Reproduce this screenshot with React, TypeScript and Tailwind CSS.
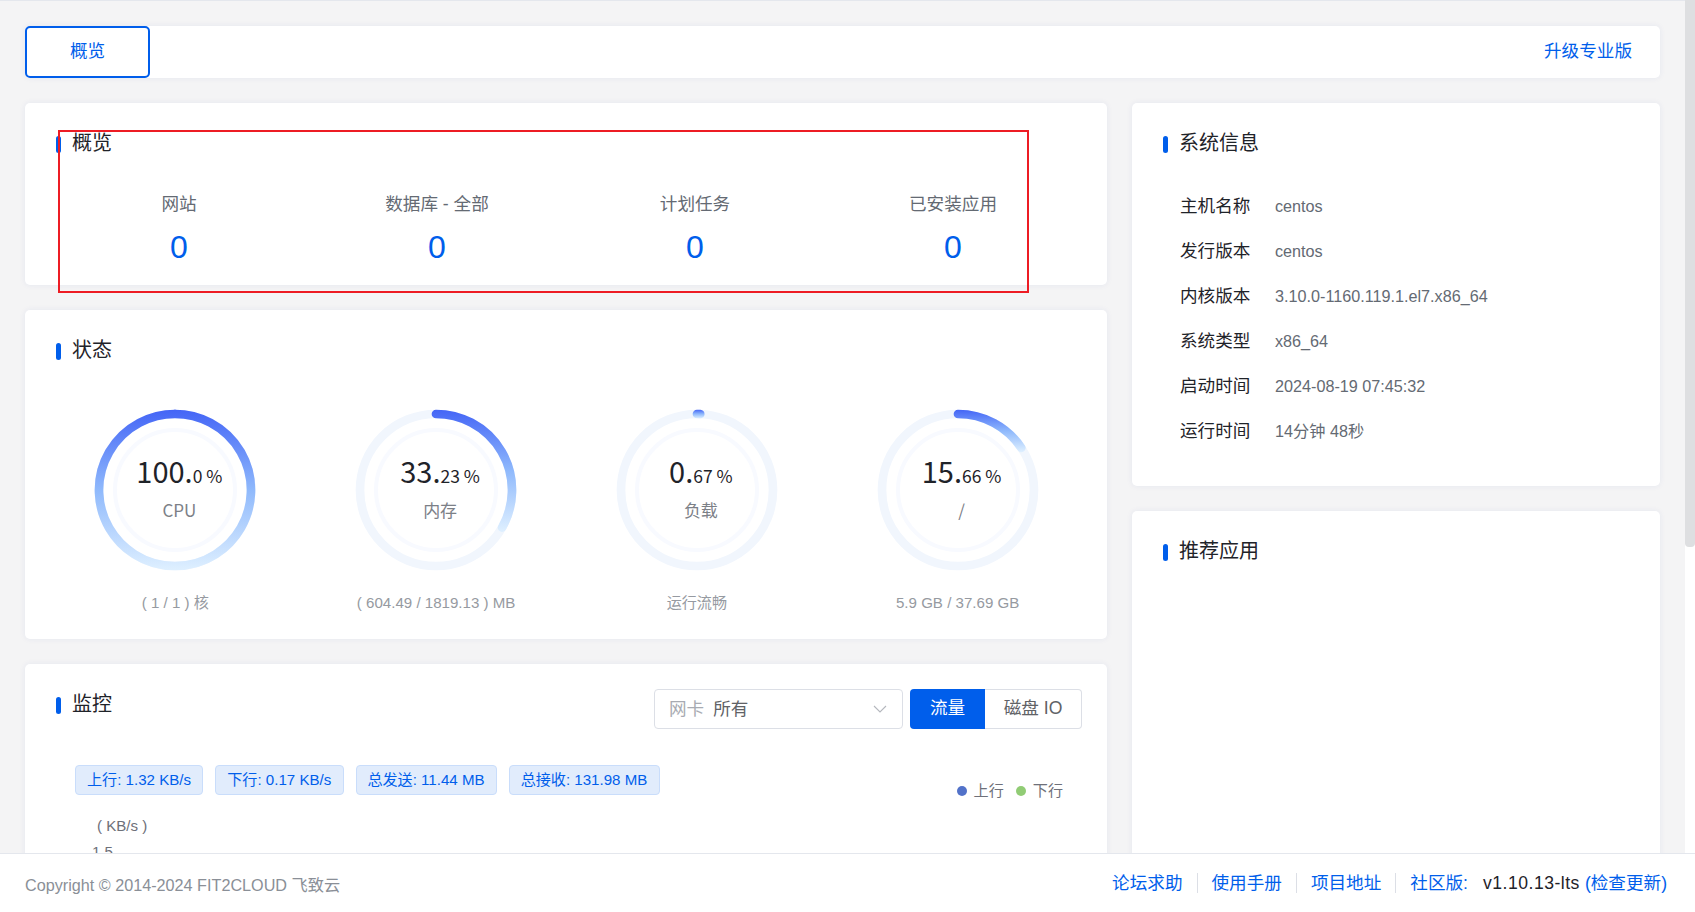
import React from "react";

const sans = "font-['Liberation_Sans','Noto_Sans_CJK_SC',sans-serif]";

function Title({ children }: { children: React.ReactNode }) {
  return (
    <div className="flex h-[24px] items-center">
      <span className="mt-[3px] h-[17px] w-[5px] rounded-[3px] bg-[#005eeb]" />
      <span className="ml-[11px] text-[20px] leading-[24px] text-[#1f2329]">{children}</span>
    </div>
  );
}

function Gauge({ id, pct, big, small, name, sub }: { id: string; pct: number; big: string; small: string; name: string; sub: string }) {
  const c = 84;
  const r = 76;
  const w = 8.7;
  const a = (pct / 100) * 2 * Math.PI;
  const ex = c + r * Math.sin(a);
  const ey = c - r * Math.cos(a);
  const full = pct >= 100;
  const d = full
    ? `M ${c} ${c - r} A ${r} ${r} 0 1 1 ${c - 0.01} ${c - r}`
    : `M ${c} ${c - r} A ${r} ${r} 0 ${pct > 50 ? 1 : 0} 1 ${ex} ${ey}`;
  const y1 = c - r - w / 2;
  const y2 = (full ? c + r : ey) + w / 2;
  return (
    <div className="flex flex-col items-center">
      <div className="relative h-[168px] w-[168px]">
        <svg width="168" height="168" viewBox="0 0 168 168">
          <defs>
            <linearGradient id={id} gradientUnits="userSpaceOnUse" x1="0" y1={y1} x2="0" y2={y2}>
              <stop offset="0" stopColor="#4465f6" />
              <stop offset="0.5" stopColor="#8fb9fc" />
              <stop offset="1" stopColor="#dff0ff" />
            </linearGradient>
          </defs>
          <circle cx={c} cy={c} r={r} fill="none" stroke="#f1f6fd" strokeWidth={w} />
          <circle cx={c} cy={c} r={60} fill="none" stroke="#f8faff" strokeWidth={4} />
          <path d={d} fill="none" stroke={`url(#${id})`} strokeWidth={w} strokeLinecap="round" />
        </svg>
        <div className="absolute inset-0 flex flex-col items-center pl-[8px] font-['Noto_Sans_CJK_SC',sans-serif]">
          <div className="mt-[44px] h-[40px] whitespace-nowrap leading-[40px] text-[#1f2329]">
            <span className="text-[29px]">{big}</span>
            <span className="text-[17.5px]">{small}</span>
          </div>
          <div className="mt-[9px] text-[17px] leading-[22px] text-[#7c8087]">{name}</div>
        </div>
      </div>
      <div className="mt-[19px] text-[15.1px] leading-[20px] text-[#969aa1]">{sub}</div>
    </div>
  );
}

function Stat({ label }: { label: string }) {
  return (
    <div className="flex flex-col items-center">
      <div className="text-[17.6px] leading-[24px] text-[#646a73]">{label}</div>
      <div className="mt-[14px] text-[32px] leading-[34px] text-[#005eeb]">0</div>
    </div>
  );
}

const rows = [
  ["主机名称", "centos"],
  ["发行版本", "centos"],
  ["内核版本", "3.10.0-1160.119.1.el7.x86_64"],
  ["系统类型", "x86_64"],
  ["启动时间", "2024-08-19 07:45:32"],
  ["运行时间", "14分钟 48秒"],
];

const cardCls = "rounded-[5px] bg-white shadow-[0_0_6px_rgba(0,60,160,0.07)]";

export default function App() {
  return (
    <div className={`flex h-screen w-full flex-col overflow-hidden bg-white ${sans}`}>
      <div className="flex min-h-0 flex-1">
        <div className="relative flex min-w-0 flex-1 flex-col overflow-hidden border-t border-[#e4e7ed] bg-[#f4f4f5] px-[25px] pt-[25px]">
          <div className={`flex h-[52px] shrink-0 items-center justify-between pr-[28px] ${cardCls}`}>
            <div className="flex h-[52px] w-[125px] items-center justify-center rounded-[5px] border-2 border-[#005eeb] pb-[2px] text-[17.6px] text-[#005eeb]">
              概览
            </div>
            <span className="pb-[2px] text-[17.6px] text-[#005eeb]">升级专业版</span>
          </div>

          <div className="mt-[25px] grid grid-cols-[1082px_528px] gap-x-[25px]">
            <div className="flex flex-col gap-[25px]">
              <div className={`h-[182px] shrink-0 ${cardCls} px-[25px] pt-[28px]`}>
                <div className="pl-[6px]">
                  <Title>概览</Title>
                </div>
                <div className="mt-[37px] grid grid-cols-4">
                  <Stat label="网站" />
                  <Stat label="数据库 - 全部" />
                  <Stat label="计划任务" />
                  <Stat label="已安装应用" />
                </div>
              </div>

              <div className={`h-[329px] shrink-0 ${cardCls} pl-[20px] pr-[19px] pt-[28px]`}>
                <div className="pl-[11px]">
                  <Title>状态</Title>
                </div>
                <div className="mt-[44px] grid grid-cols-4">
                  <Gauge id="g1" pct={100} big="100." small="0 %" name="CPU" sub="( 1 / 1 ) 核" />
                  <Gauge id="g2" pct={33.23} big="33." small="23 %" name="内存" sub="( 604.49 / 1819.13 ) MB" />
                  <Gauge id="g3" pct={0.67} big="0." small="67 %" name="负载" sub="运行流畅" />
                  <Gauge id="g4" pct={15.66} big="15." small="66 %" name="/" sub="5.9 GB / 37.69 GB" />
                </div>
              </div>

              <div className={`h-[400px] shrink-0 ${cardCls} relative px-[25px] pt-[25px]`}>
                <div className="flex items-start justify-between">
                  <div className="pl-[6px] pt-[3px]">
                    <Title>监控</Title>
                  </div>
                  <div className="flex">
                    <div className="flex h-[40px] w-[249px] items-center justify-between rounded-[4px] border border-[#dcdfe6] pl-[14px] pr-[14px] text-[17.6px]">
                      <span>
                        <span className="text-[#a8abb2]">网卡</span>
                        <span className="ml-[9px] text-[#606266]">所有</span>
                      </span>
                      <svg width="16" height="10" viewBox="0 0 16 10" fill="none">
                        <path d="M2 2 L8 8 L14 2" stroke="#b4b7bd" strokeWidth="1.1" />
                      </svg>
                    </div>
                    <div className="ml-[7px] flex h-[40px] w-[75px] items-center justify-center rounded-l-[4px] bg-[#005eeb] pb-[2px] text-[17.6px] text-white">
                      流量
                    </div>
                    <div className="flex h-[40px] w-[97px] items-center justify-center rounded-r-[4px] border border-l-0 border-[#dcdfe6] pb-[2px] text-[17.6px] text-[#606266]">
                      磁盘 IO
                    </div>
                  </div>
                </div>
                <div className="mt-[36px] flex items-start justify-between pl-[25px]">
                  <div className="flex gap-[12px]">
                    {[
                      ["上行: 1.32 KB/s", "w-[128px]"],
                      ["下行: 0.17 KB/s", "w-[128.5px]"],
                      ["总发送: 11.44 MB", "w-[141px]"],
                      ["总接收: 131.98 MB", "w-[151px]"],
                    ].map(([t, w]) => (
                      <div key={t} className={`flex h-[30px] ${w} items-center justify-center whitespace-nowrap rounded-[4px] border border-[#c9ddfb] bg-[#e1ecfc] pt-[1px] text-[15.1px] text-[#005eeb]`}>
                        {t}
                      </div>
                    ))}
                  </div>
                  <div className="mr-[19px] mt-[16px] flex items-center text-[15.1px] leading-[20px] text-[#6e7079]">
                    <span className="h-[10px] w-[10px] rounded-full bg-[#5272c9]" />
                    <span className="ml-[7px]">上行</span>
                    <span className="ml-[12px] h-[10px] w-[10px] rounded-full bg-[#91cc75]" />
                    <span className="ml-[7px]">下行</span>
                  </div>
                </div>
                <div className="ml-[47px] mt-[15px] text-[15.1px] leading-[20px] text-[#6e7079]">( KB/s )</div>
                <div className="ml-[42px] mt-[6px] text-[15.1px] leading-[20px] text-[#6e7079]">1.5</div>
              </div>
            </div>

            <div className="flex flex-col gap-[25px]">
              <div className={`h-[383px] shrink-0 ${cardCls} pl-[31px] pt-[28px]`}>
                <Title>系统信息</Title>
                <div className="mt-[29px] flex flex-col pl-[17px]">
                  {rows.map(([k, v]) => (
                    <div key={k} className="flex h-[45px] items-center">
                      <span className="w-[95px] text-[17.6px] text-[#1f2329]">{k}</span>
                      <span className="text-[16.2px] text-[#646a73]">{v}</span>
                    </div>
                  ))}
                </div>
              </div>
              <div className={`h-[500px] shrink-0 ${cardCls} pl-[31px] pt-[28px]`}>
                <Title>推荐应用</Title>
              </div>
            </div>
          </div>

          <div className="absolute left-[58px] top-[129px] h-[163px] w-[971px] border-2 border-[#ed1c24]" />
        </div>
        <div className="w-[10px] shrink-0 bg-white">
          <div className="h-[547px] rounded-b-[4px] bg-[#dedfe1]" />
        </div>
      </div>

      <div className="flex h-[59px] shrink-0 items-center justify-between border-t border-[#e4e7ed] bg-white pl-[25px] pr-[28px]">
        <span className="mt-[5px] text-[16.2px] text-[#8a8f97]">Copyright © 2014-2024 FIT2CLOUD 飞致云</span>
        <div className="flex items-center text-[17.6px] text-[#005eeb]">
          <span>论坛求助</span>
          <span className="mx-[14px] h-[20px] w-px bg-[#dcdfe6]" />
          <span>使用手册</span>
          <span className="mx-[14px] h-[20px] w-px bg-[#dcdfe6]" />
          <span>项目地址</span>
          <span className="mx-[14px] h-[20px] w-px bg-[#dcdfe6]" />
          <span>社区版:</span>
          <span className="ml-[15px] tracking-[0.5px] text-[#1f2329]">v1.10.13-lts</span>
          <span className="ml-[5px]">(检查更新)</span>
        </div>
      </div>
    </div>
  );
}
